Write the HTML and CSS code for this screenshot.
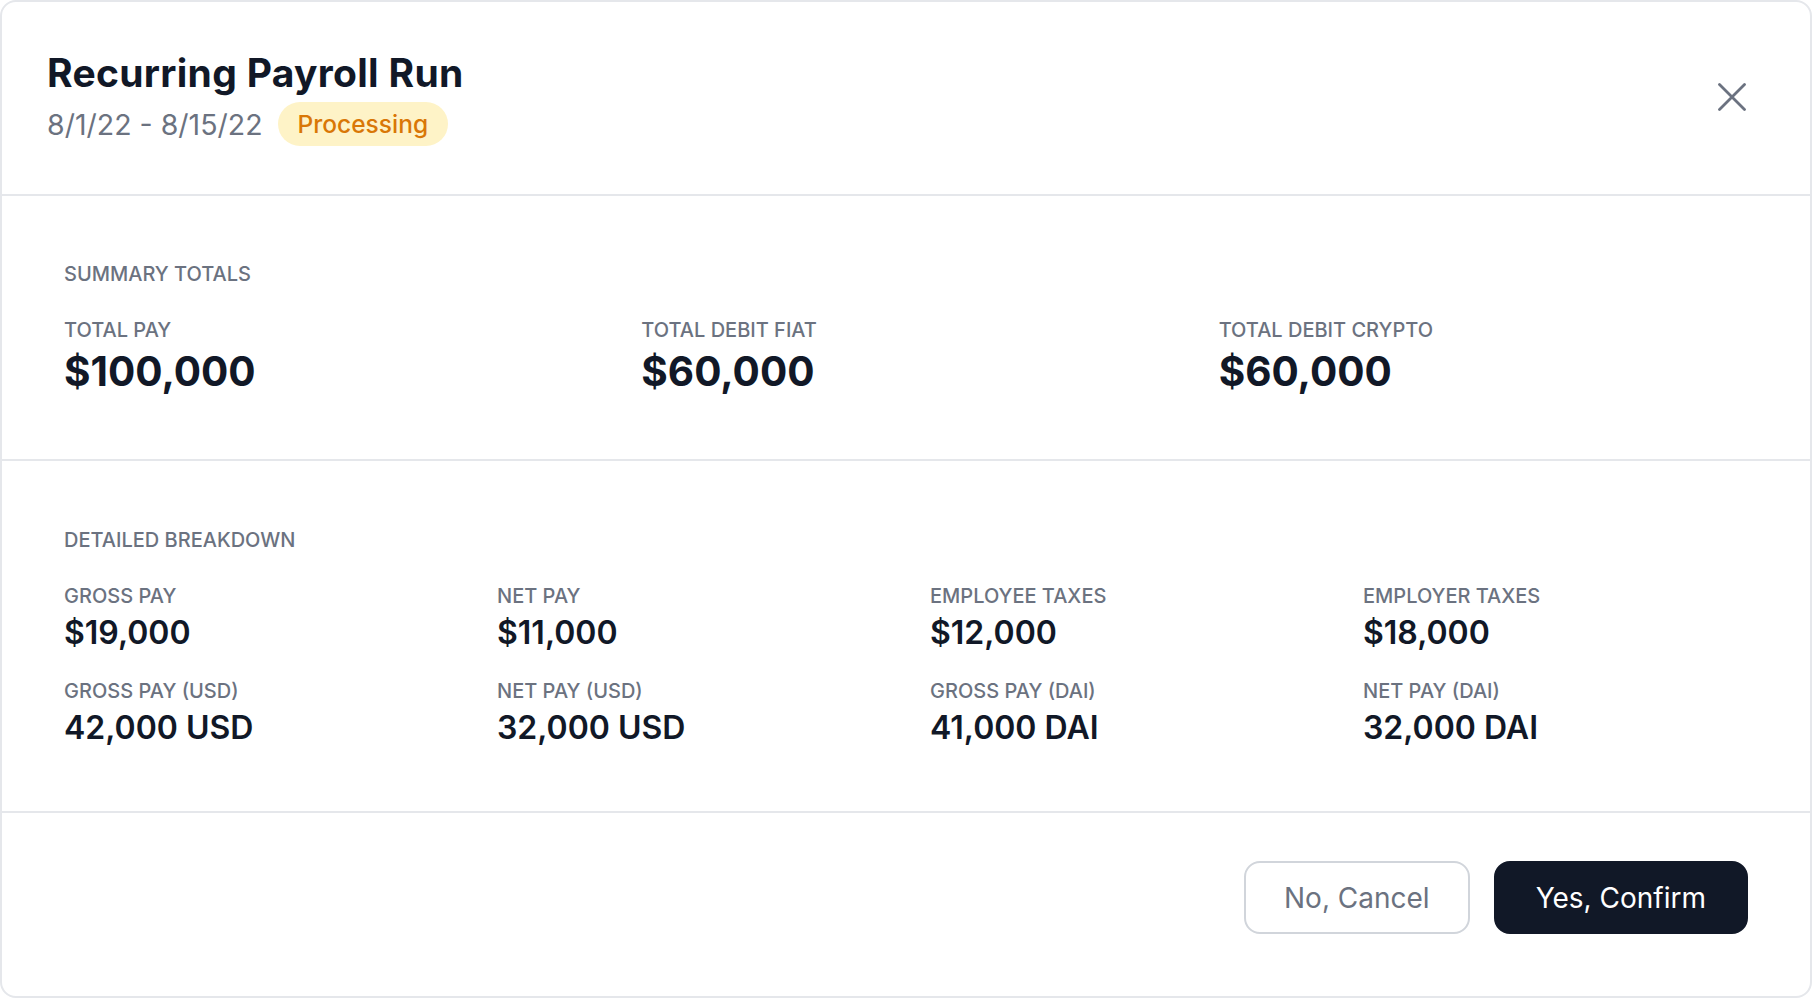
FILE: index.html
```html
<!DOCTYPE html>
<html lang="en">
<head>
    <meta charset="UTF-8" />
    <meta name="viewport" content="width=device-width, initial-scale=1.0"/>
    <title>Recurring Payroll Run</title>
    <link rel="stylesheet" href="styles.css">
</head>
<body>
    <div class="modal">
        <header class="modal-header">
            <div class="header-text">
                <h1 class="title">Recurring Payroll Run</h1>
                <div class="subtitle">
                    <span class="dates">8/1/22 - 8/15/22</span>
                    <span class="badge">Processing</span>
                </div>
            </div>
            <button class="close-btn" aria-label="Close">
                <svg width="28" height="28" viewBox="0 0 28 28" fill="none" stroke="currentColor" stroke-width="2.8" stroke-linecap="round">
                    <path d="M1.5 1.5L26.5 26.5M26.5 1.5L1.5 26.5"/>
                </svg>
            </button>
        </header>

        <section class="section">
            <h2 class="section-title">SUMMARY TOTALS</h2>
            <div class="stats summary">
                <div class="stat">
                    <p class="stat-label">TOTAL PAY</p>
                    <p class="stat-value total">$100,000</p>
                </div>
                <div class="stat">
                    <p class="stat-label">TOTAL DEBIT FIAT</p>
                    <p class="stat-value total">$60,000</p>
                </div>
                <div class="stat">
                    <p class="stat-label">TOTAL DEBIT CRYPTO</p>
                    <p class="stat-value total">$60,000</p>
                </div>
            </div>
        </section>

        <section class="section breakdown">
            <h2 class="section-title">DETAILED BREAKDOWN</h2>
            <div class="stats details">
                <div class="stat">
                    <p class="stat-label">GROSS PAY</p>
                    <p class="stat-value">$19,000</p>
                </div>
                <div class="stat">
                    <p class="stat-label">NET PAY</p>
                    <p class="stat-value">$11,000</p>
                </div>
                <div class="stat">
                    <p class="stat-label">EMPLOYEE TAXES</p>
                    <p class="stat-value">$12,000</p>
                </div>
                <div class="stat">
                    <p class="stat-label">EMPLOYER TAXES</p>
                    <p class="stat-value">$18,000</p>
                </div>
                <div class="stat">
                    <p class="stat-label">GROSS PAY (USD)</p>
                    <p class="stat-value">42,000 USD</p>
                </div>
                <div class="stat">
                    <p class="stat-label">NET PAY (USD)</p>
                    <p class="stat-value">32,000 USD</p>
                </div>
                <div class="stat">
                    <p class="stat-label">GROSS PAY (DAI)</p>
                    <p class="stat-value">41,000 DAI</p>
                </div>
                <div class="stat">
                    <p class="stat-label">NET PAY (DAI)</p>
                    <p class="stat-value">32,000 DAI</p>
                </div>
            </div>
        </section>

        <footer class="modal-footer">
            <button class="btn btn-cancel">No, Cancel</button>
            <button class="btn btn-confirm">Yes, Confirm</button>
        </footer>
    </div>
</body>
</html>
```

FILE: styles.css
```css
* { box-sizing: border-box; }
body { margin: 0; font-family: Inter, "Noto Sans", "Liberation Sans", sans-serif; background-color: #fff; color: #111827; }
.modal { height: 100vh; display: flex; flex-direction: column; border: 2px solid #e5e7eb; border-radius: 16px; background: #fff; overflow: hidden; }

/* header */
.modal-header { display: flex; align-items: flex-start; justify-content: space-between; padding: 49px 64px 48px 45px; border-bottom: 2px solid #e5e7eb; }
.title { margin: 0; font-size: 39px; line-height: 44px; font-weight: 700; letter-spacing: 0.3px; color: #111827; }
.subtitle { display: flex; align-items: center; gap: 15px; margin-top: 7px; height: 44px; }
.dates { font-size: 28.5px; color: #6b7280; }
.badge { display: inline-flex; align-items: center; height: 44px; padding: 0 20px; border-radius: 22px; background-color: #fef3c7; color: #d97706; font-size: 24.5px; font-weight: 500; }
.close-btn { margin-top: 32px; padding: 0; border: 0; background: none; color: #6b7280; line-height: 0; cursor: pointer; }

/* sections */
.section { padding: 64px 62px 63px; border-bottom: 2px solid #e5e7eb; }
.breakdown { padding: 65px 62px 63px; }
.section-title { margin: 0 0 28px 0; font-size: 20px; line-height: 28px; font-weight: 500; color: #6b7280; }
.stats { display: grid; column-gap: 48px; }
.summary { grid-template-columns: repeat(3, 1fr); }
.details { grid-template-columns: repeat(4, 1fr); row-gap: 24px; }
.stat-label { margin: 0 0 3px 0; font-size: 20px; line-height: 28px; font-weight: 500; color: #6b7280; }
.stat-value { margin: 0; font-size: 32px; line-height: 40px; font-weight: 600; color: #111827; }
.summary .stat-label { margin-bottom: 4px; }
.stat-value.total { font-size: 40.5px; line-height: 48px; font-weight: 700; }

/* footer */
.modal-footer { flex: 1; display: flex; justify-content: flex-end; align-items: flex-start; gap: 24px; padding: 48px 62px 0; }
.btn { height: 73px; padding: 0 40px; border: 2px solid #d1d5db; border-radius: 16px; font-family: inherit; font-size: 28px; font-weight: 400; cursor: pointer; }
.btn-cancel { padding: 0 38px; background-color: #fff; color: #6b7280; }
.btn-confirm { background-color: #111827; border-color: #111827; color: #fff; }
```
